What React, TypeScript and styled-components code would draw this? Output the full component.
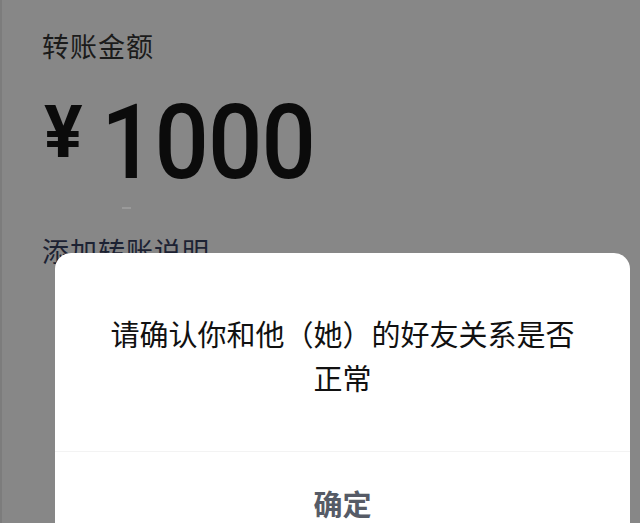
import React from "react";
import styled, { createGlobalStyle } from "styled-components";

const Global = createGlobalStyle`
  html, body { margin: 0; padding: 0; }
  body {
    width: 640px;
    height: 523px;
    overflow: hidden;
    background: #878787;
    font-family: "Noto Sans CJK SC", "Noto Sans", sans-serif;
  }
`;

const Page = styled.div`
  position: relative;
  width: 640px;
  height: 523px;
  overflow: hidden;
  background: #878787;
  border-left: 2px solid #7c7c7c;
  box-sizing: border-box;
`;

const Content = styled.div`
  display: flex;
  flex-direction: column;
  padding: 29px 0 0 40px;
`;

const Label = styled.div`
  font-size: 27px;
  line-height: 34px;
  color: #1b1b1b;
  letter-spacing: 1px;
`;

const AmountRow = styled.div`
  display: flex;
  align-items: flex-start;
  gap: 18px;
  margin-top: 32px;
  height: 90px;
`;

const Yen = styled.span`
  font-family: Roboto, "Noto Sans", sans-serif;
  font-weight: 700;
  font-size: 72px;
  line-height: 64px;
  color: #0b0b0b;
  margin: 6px 0 0 2px;
`;

const Digits = styled.span`
  display: inline-block;
  font-family: Roboto, "Noto Sans", sans-serif;
  font-weight: 500;
  font-size: 103px;
  line-height: 80px;
  color: #0b0b0b;
  letter-spacing: -1px;
  margin-top: 8px;
  transform: scaleX(0.93);
  transform-origin: left center;
`;

const Cursor = styled.div`
  width: 9px;
  height: 2px;
  background: #9a9a9a;
  margin: 22px 0 0 80px;
`;

const Note = styled.div`
  font-size: 27px;
  line-height: 34px;
  color: #1c2233;
  margin-top: 25px;
  letter-spacing: 1px;
`;

const Dialog = styled.div`
  position: absolute;
  left: 53px;
  top: 253px;
  width: 575px;
  height: 300px;
  background: #ffffff;
  border-radius: 16px;
  display: flex;
  flex-direction: column;
`;

const Message = styled.div`
  padding: 58px 52px 0;
  font-size: 29px;
  line-height: 44px;
  color: #111111;
  text-align: center;
`;

const Divider = styled.div`
  margin: 52px 0 0;
  height: 1px;
  background: #f3f3f3;
`;

const Confirm = styled.div`
  height: 70px;
  padding-top: 31px;
  box-sizing: border-box;
  display: flex;
  align-items: flex-start;
  justify-content: center;
  font-size: 29px;
  line-height: 40px;
  font-weight: 700;
  color: #565b66;
`;

export default function App() {
  return (
    <>
      <Global />
      <Page>
        <Content>
          <Label>转账金额</Label>
          <AmountRow>
            <Yen>¥</Yen>
            <Digits>1000</Digits>
          </AmountRow>
          <Cursor />
          <Note>添加转账说明</Note>
        </Content>
        <Dialog>
          <Message>请确认你和他（她）的好友关系是否正常</Message>
          <Divider />
          <Confirm>确定</Confirm>
        </Dialog>
      </Page>
    </>
  );
}
